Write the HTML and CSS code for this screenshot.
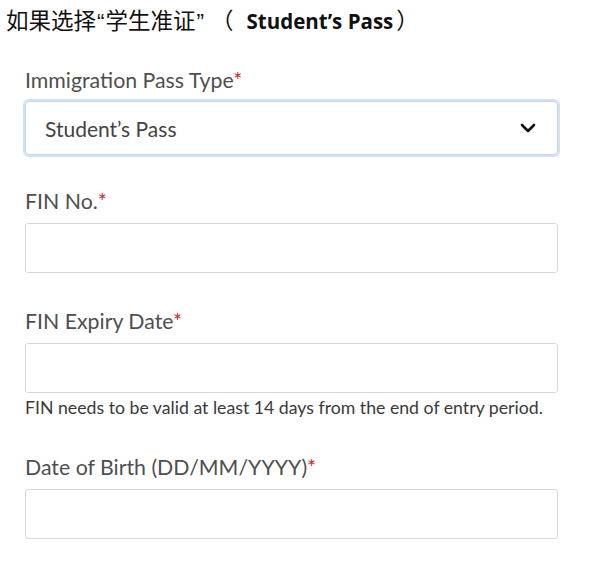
FILE: index.html
```html
<!DOCTYPE html>
<html>
<head>
<meta charset="utf-8">
<link rel="stylesheet" href="styles.css">
</head>
<body>
<h1 class="title">如果选择<span class="q">“</span>学生准证<span class="q">”</span><span class="paren open">（</span><b>Student’s Pass</b><span class="paren close">）</span></h1>
<form class="form">
  <div class="field field-select">
    <label class="label">Immigration Pass Type<span class="req">*</span></label>
    <div class="select">
      <span class="select-value">Student’s Pass</span>
      <svg class="chev" width="16" height="10" viewBox="0 0 16 10"><path d="M2 2 L8 8 L14 2" fill="none" stroke="#111" stroke-width="2.6" stroke-linecap="round" stroke-linejoin="round"/></svg>
    </div>
  </div>
  <div class="field">
    <label class="label">FIN No.<span class="req">*</span></label>
    <div class="input"></div>
  </div>
  <div class="field">
    <label class="label">FIN Expiry Date<span class="req">*</span></label>
    <div class="input"></div>
    <p class="help">FIN needs to be valid at least 14 days from the end of entry period.</p>
  </div>
  <div class="field field-dob">
    <label class="label">Date of Birth (DD/MM/YYYY)<span class="req">*</span></label>
    <div class="input"></div>
  </div>
</form>
</body>
</html>
```
FILE: styles.css
```css
html, body {
  margin: 0;
  background: #fff;
}
body {
  width: 593px;
  height: 565px;
  overflow: hidden;
}
.title {
  margin: 0;
  padding: 6px 0 0 6px;
  font-family: "Noto Sans CJK SC", "Noto Sans", sans-serif;
  font-weight: 400;
  font-size: 22.5px;
  line-height: 26px;
  color: #111;
  white-space: nowrap;
  text-spacing-trim: space-all;
  font-feature-settings: "chws" 0, "halt" 0;
}
.title .q {
  font-family: "Liberation Sans", sans-serif;
  padding: 0 1px;
}
.title .paren {
  display: inline-block;
}
.title .open {
  margin-left: 6px;
  margin-right: 13px;
}
.title .close {
  margin-left: 3px;
}
.title b {
  font-family: "Open Sans", "Noto Sans CJK SC", sans-serif;
  font-weight: 700;
  font-size: 20.5px;
}
.form {
  padding: 33px 0 0 25px;
  width: 533px;
  font-family: Lato, "Noto Sans", sans-serif;
}
.field {
  display: flex;
  flex-direction: column;
}
.field + .field {
  margin-top: 36px;
}
.field-select {
  margin-bottom: -2px;
}
.field-dob {
  margin-top: 37px !important;
}
.label {
  font-size: 21.3px;
  line-height: 24px;
  color: #4f4f4f;
  margin-bottom: 10px;
}
.req {
  color: #d0242b;
}
.select {
  height: 54px;
  margin-top: -1px;
  box-sizing: border-box;
  border: 1px solid #c2d4e6;
  border-radius: 4px;
  box-shadow: 0 0 0 2px #d4e3f2;
  display: flex;
  align-items: center;
  justify-content: space-between;
  padding: 0 21px 0 19px;
}
.select-value {
  font-size: 21px;
  color: #444;
}
.chev {
  display: block;
}
.input {
  height: 50px;
  box-sizing: border-box;
  border: 1px solid #d8d8d8;
  border-radius: 3px;
}
.help {
  margin: 5px 0 0;
  font-size: 17.7px;
  line-height: 20px;
  color: #3a3a3a;
}
```
